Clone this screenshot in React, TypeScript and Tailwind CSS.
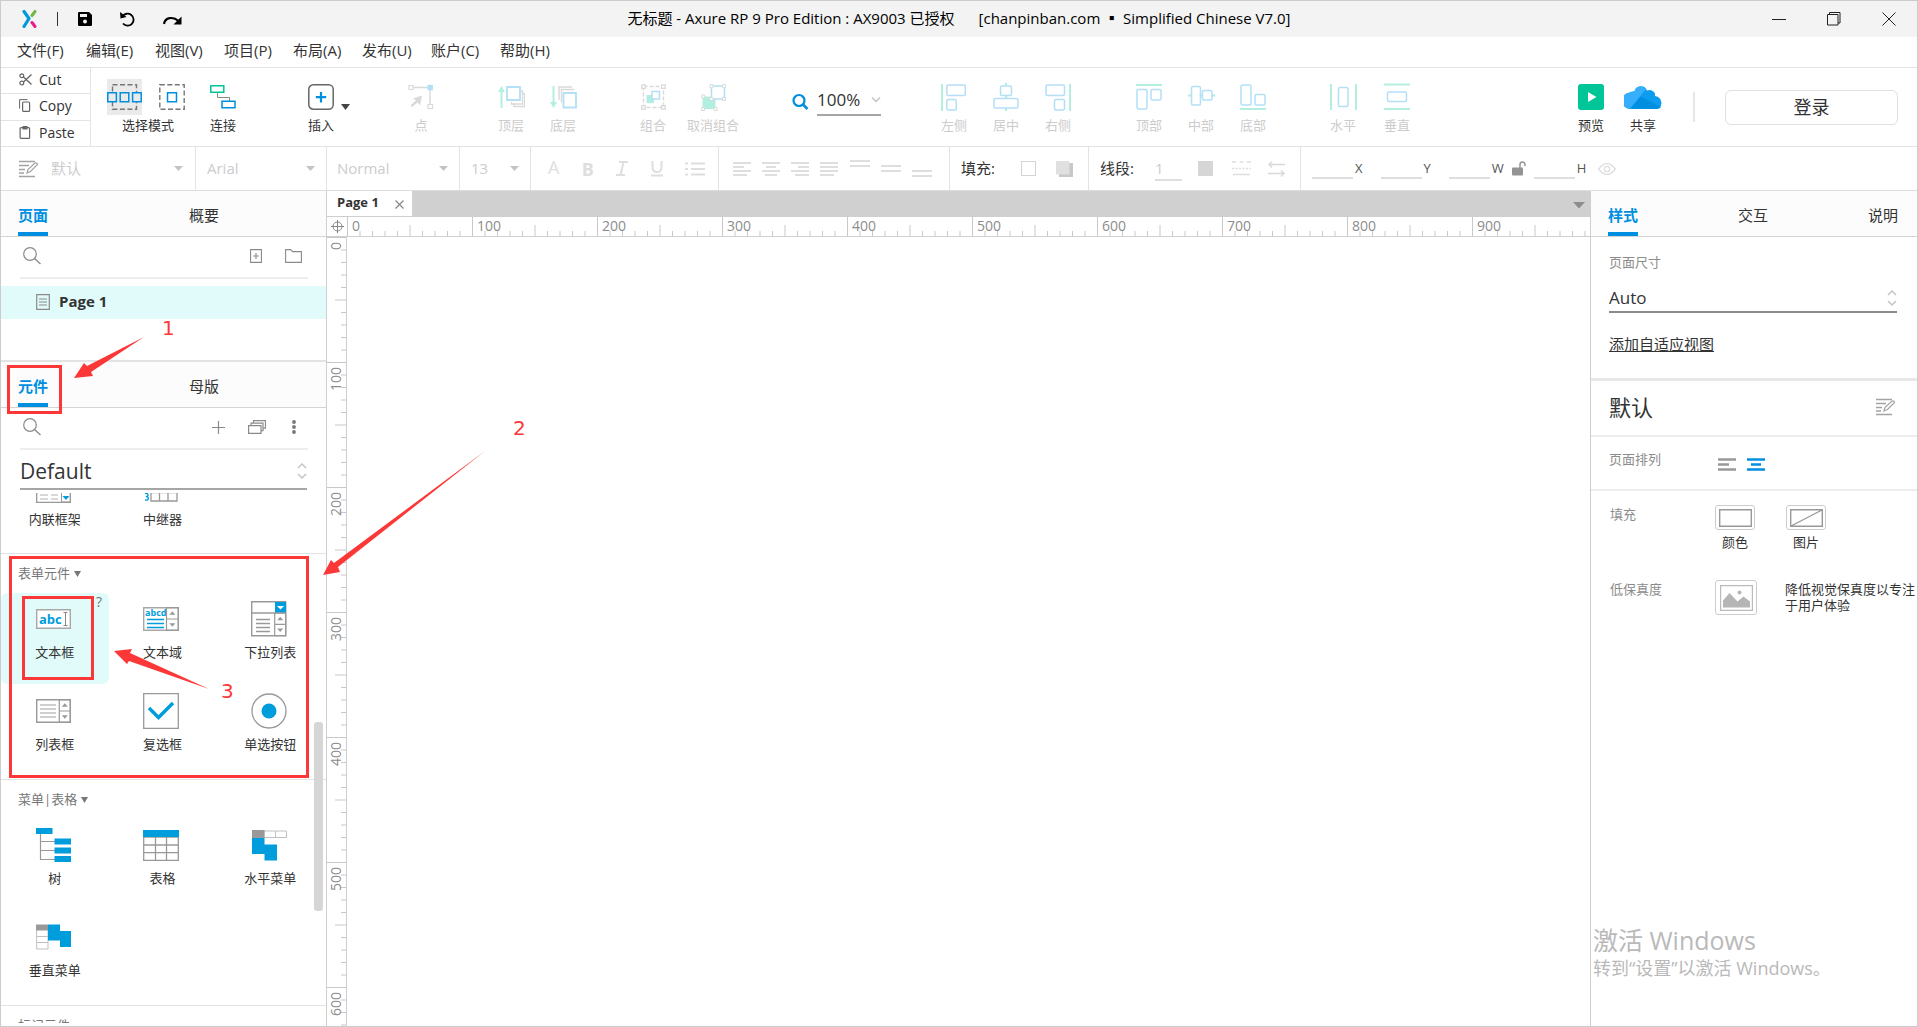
import type { ReactNode } from "react";

const WIDGET_BLUE = "#009ddc";
const UI_BLUE = "#008fe0";
const GREEN = "#00c597";
const PALE_BLUE = "#b3dff7";
const PALE_GREEN = "#b3efe0";
const PALE_GRAY = "#d9d9d9";
const GRAY = "#999999";

const MENUS = ["文件(F)", "编辑(E)", "视图(V)", "项目(P)", "布局(A)", "发布(U)", "账户(C)", "帮助(H)"];
const H_MARKS = [0, 100, 200, 300, 400, 500, 600, 700, 800, 900];
const V_MARKS = [0, 100, 200, 300, 400, 500, 600];
const MINOR_TICKS = [1, 2, 3, 4, 6, 7, 8, 9];

type ChildProps = { children: ReactNode };

/* ---------- shared bits ---------- */

function Icon({ w, h, children }: ChildProps & { w: number; h: number }) {
  return (
    <svg width={w} height={h} viewBox={`0 0 ${w} ${h}`} fill="none" aria-hidden className="block shrink-0">
      {children}
    </svg>
  );
}

function Caret() {
  return (
    <Icon w={9} h={5}>
      <path d="M0 0h9L4.500 5z" fill="#c4c4c4" />
    </Icon>
  );
}

function UpDown() {
  return (
    <Icon w={10} h={18}>
      <path d="M1 6l4-4 4 4M1 12l4 4 4-4" stroke="#c4c4c4" strokeWidth="1.500" />
    </Icon>
  );
}

function SearchIcon() {
  return (
    <Icon w={18} h={18}>
      <circle cx="7" cy="7" r="6.300" stroke="#8a8a8a" strokeWidth="1.200" />
      <path d="M11.500 11.500l6 5.500" stroke="#8a8a8a" strokeWidth="1.400" />
    </Icon>
  );
}

function PencilIcon() {
  return (
    <Icon w={20} h={18}>
      <path d="M0 1.500h16M0 5.500h10M0 9.500h6M0 13h5M0 16.500h16" stroke="#a3a3a3" strokeWidth="1.300" />
      <path d="M8 13l1-3.500 7-6.500q2-.8 2.500 1.500l-7 7z" fill="white" stroke="#a3a3a3" strokeWidth="1.200" />
    </Icon>
  );
}

function PanelTab({ label, active }: { label: string; active?: boolean }) {
  return (
    <button
      type="button"
      className={
        active
          ? "flex h-[45px] items-center border-b-4 border-[#008fe0] pt-2 text-[15px] font-bold text-[#008fe0]"
          : "flex h-[45px] items-center border-b-4 border-transparent pt-2 text-[15px]"
      }
    >
      {label}
    </button>
  );
}

function SearchRow({ label, children }: ChildProps & { label: string }) {
  return (
    <div className="ml-[19px] mr-[18px] flex h-[42px] items-center border-b-2 border-[#ededed] pb-[2px] pl-[3px]">
      <label className="flex flex-1 items-center">
        <SearchIcon />
        <input type="text" aria-label={label} className="h-6 w-24 outline-none" />
      </label>
      {children}
    </div>
  );
}

/* ---------- title bar and menus ---------- */

function TitleBar() {
  return (
    <header className="grid h-9 shrink-0 grid-cols-[1fr_auto_1fr] items-center bg-[#f3f3f3] text-[15px] text-black">
      <div className="flex items-center pl-[21px]">
        <Icon w={15} h={18}>
          <path d="M2 1.500L7 8.500 2 16.500" stroke="#0099dc" strokeWidth="3.200" strokeLinecap="round" strokeLinejoin="round" />
          <path d="M10 5.500l3-4" stroke="#73b843" strokeWidth="3" strokeLinecap="round" />
          <path d="M10 12.500l3 4" stroke="#ec1c8e" strokeWidth="3" strokeLinecap="round" />
        </Icon>
        <span className="ml-5 h-[14px] w-px bg-[#333]" />
        <button type="button" aria-label="Save" className="ml-5">
          <Icon w={14} h={14}>
            <path d="M1 0h10l3 3v10q0 1-1 1H1q-1 0-1-1V1q0-1 1-1z" fill="black" />
            <path d="M2 2h7v3H2z" fill="#f3f3f3" />
            <circle cx="7" cy="9.500" r="2" fill="#f3f3f3" />
          </Icon>
        </button>
        <button type="button" aria-label="Undo" className="ml-7">
          <Icon w={15} h={15}>
            <path d="M2.500 4.500A6 6 0 1 1 3 11.500" stroke="black" strokeWidth="1.800" />
            <path d="M0 0l.5 6.500 6-1.500z" fill="black" />
          </Icon>
        </button>
        <button type="button" aria-label="Redo" className="ml-7">
          <Icon w={19} h={15}>
            <path d="M1 12C2 5.500 10 4 15.500 9" stroke="black" strokeWidth="2.200" />
            <path d="M18.500 4.500v8h-8z" fill="black" />
          </Icon>
        </button>
      </div>
      <h1 className="flex gap-6 whitespace-pre pb-[2px]">
        <span>无标题 - Axure RP 9 Pro Edition : AX9003 已授权</span>
        <span>[chanpinban.com ▪ Simplified Chinese V7.0]</span>
      </h1>
      <div className="flex items-center justify-end gap-[41px] pr-[21px]">
        <button type="button" aria-label="Minimize">
          <Icon w={14} h={14}>
            <path d="M0 7.500h14" stroke="#222" />
          </Icon>
        </button>
        <button type="button" aria-label="Restore">
          <Icon w={14} h={14}>
            <path d="M.5 2.500h10.500v10.500H.5zM2.500 2.500v-2h10.500v10.500h-2" stroke="#222" />
          </Icon>
        </button>
        <button type="button" aria-label="Close">
          <Icon w={14} h={14}>
            <path d="M.5 .5l13 13M13.500 .5l-13 13" stroke="#222" />
          </Icon>
        </button>
      </div>
    </header>
  );
}

function MenuBar() {
  return (
    <nav className="flex h-[30px] shrink-0 items-center gap-5 pb-1 pl-4 text-[15px]">
      {MENUS.map((m) => (
        <button key={m} type="button" className="w-[49px] whitespace-nowrap text-left">
          {m}
        </button>
      ))}
    </nav>
  );
}

/* ---------- main toolbar ---------- */

function Tool({ label, on, children }: ChildProps & { label: string; on?: boolean }) {
  return (
    <button
      type="button"
      disabled={!on}
      className={
        on
          ? "flex w-[52px] shrink-0 flex-col items-center whitespace-nowrap text-[13px] leading-5 text-[#333]"
          : "flex w-[52px] shrink-0 flex-col items-center whitespace-nowrap text-[13px] leading-5 text-[#cccccc]"
      }
    >
      <span className="flex h-9 items-center">{children}</span>
      {label}
    </button>
  );
}

function ClipButton({ label, children }: ChildProps & { label: string }) {
  return (
    <button type="button" className="flex flex-1 items-center gap-[7px] pb-[2px] pl-[18px] text-[14px]">
      {children}
      {label}
    </button>
  );
}

function Toolbar() {
  return (
    <div className="flex h-20 shrink-0 items-stretch border-y border-[#e3e3e3]">
      <div className="flex w-[90px] shrink-0 flex-col divide-y divide-[#e3e3e3] border-r border-[#e3e3e3]">
        <ClipButton label="Cut">
          <Icon w={13} h={13}>
            <circle cx="2.800" cy="2.800" r="1.900" stroke="#666" strokeWidth="1.200" />
            <circle cx="2.800" cy="10" r="1.900" stroke="#666" strokeWidth="1.200" />
            <path d="M4.500 4l8 7.500M4.500 9l8-7.500" stroke="#666" strokeWidth="1.300" />
          </Icon>
        </ClipButton>
        <ClipButton label="Copy">
          <Icon w={13} h={13}>
            <path d="M8.500 .6H.6v9" stroke="#666" />
            <rect x="3.600" y="3" width="7" height="9.400" rx="1" stroke="#666" strokeWidth="1.200" />
          </Icon>
        </ClipButton>
        <ClipButton label="Paste">
          <Icon w={13} h={13}>
            <rect x="1.100" y="1.700" width="9.500" height="10.700" rx="1" stroke="#666" strokeWidth="1.200" />
            <path d="M3.500 0h5v3.500h-5z" fill="#666" />
          </Icon>
        </ClipButton>
      </div>

      <div className="flex min-w-0 flex-1 items-center">
        <div className="ml-4 flex w-[78px] shrink-0 flex-col items-center text-[13px] leading-5">
          <div className="flex w-full justify-between">
            <button type="button" aria-label="选择模式 相交" className="flex h-9 w-[35px] items-center bg-[#eaeaea]">
              <Icon w={35} h={26}>
                <path d="M5.500 .8h24v24.400h-24z" stroke="#777" strokeWidth="1.400" strokeDasharray="5 2.500" />
                <path d="M.8 8.700h8.600v9H.8zM13.200 8.700h8.600v9h-8.600zM25.600 8.700h8.600v9h-8.600z" fill="#eaeaea" stroke={UI_BLUE} strokeWidth="1.500" />
              </Icon>
            </button>
            <button type="button" aria-label="选择模式 包含" className="flex h-9 items-center">
              <Icon w={26} h={26}>
                <path d="M.8 .8h24.400v24.400H.8z" stroke="#777" strokeWidth="1.400" strokeDasharray="5 2.500" />
                <path d="M8.500 8.700h9v9h-9z" stroke={UI_BLUE} strokeWidth="1.500" />
              </Icon>
            </button>
          </div>
          <span className="pl-1">选择模式</span>
        </div>
        <div className="ml-3 flex">
          <Tool label="连接" on>
            <Icon w={26} h={24}>
              <path d="M7.500 7.500v5h12v4" stroke="#888" />
              <path d="M.8 .8h13v6.500h-13z" stroke={GREEN} strokeWidth="1.500" />
              <path d="M12 16.200h13v6.500H12z" stroke={UI_BLUE} strokeWidth="1.500" />
            </Icon>
          </Tool>
        </div>
        <div className="ml-[46px] flex items-center">
          <Tool label="插入" on>
            <Icon w={26} h={26}>
              <rect x=".8" y=".8" width="24.400" height="24.400" rx="4.500" stroke="#666" strokeWidth="1.500" />
              <path d="M13 8v10.400M7.800 13.200h10.400" stroke={UI_BLUE} strokeWidth="2.200" />
            </Icon>
          </Tool>
          <button type="button" aria-label="插入菜单" className="-ml-[6px]">
            <Icon w={9} h={6}>
              <path d="M0 0h9L4.500 6z" fill="#444" />
            </Icon>
          </button>
        </div>
        <div className="ml-[45px] flex">
          <Tool label="点">
            <Icon w={26} h={26}>
              <path d="M4 3.500h18v18" stroke={PALE_GRAY} strokeWidth="1.400" />
              <path d="M1 1.500h4v4H1zM20 20.500h4.500v4H20z" fill="white" stroke={PALE_GRAY} strokeWidth="1.200" />
              <path d="M19.500 .8h5.500v5.500h-5.500z" fill={PALE_BLUE} />
              <path d="M14 11.500l-2 10-2.500-3-5.500 4.500-1.500-1.800 5.500-4.700-3-2z" fill={PALE_GRAY} />
            </Icon>
          </Tool>
        </div>
        <div className="ml-[38px] flex">
          <Tool label="顶层">
            <Icon w={27} h={24}>
              <path d="M3.500 23V4" stroke={PALE_GREEN} strokeWidth="2" />
              <path d="M0 7l3.500-6L7 7z" fill={PALE_GREEN} />
              <path d="M22 6h2.500v13H13.500v-2M24.500 8.500H26.500v13H16v-2" stroke={PALE_GRAY} strokeWidth="1.300" />
              <path d="M9 2h13v13H9z" fill="white" stroke={PALE_BLUE} strokeWidth="1.800" />
            </Icon>
          </Tool>
          <Tool label="底层">
            <Icon w={27} h={24}>
              <path d="M3.500 1v19" stroke={PALE_GREEN} strokeWidth="2" />
              <path d="M0 17l3.500 6L7 17z" fill={PALE_GREEN} />
              <path d="M9 15V2h13M11.500 17.500v-13h13" stroke={PALE_GRAY} strokeWidth="1.400" />
              <path d="M13.500 8h12.500v14.500H13.500z" fill="white" stroke={PALE_BLUE} strokeWidth="1.800" />
            </Icon>
          </Tool>
        </div>
        <div className="ml-[38px] flex gap-2">
          <Tool label="组合">
            <Icon w={25} h={26}>
              <path d="M2.500 2.500h20v21h-20z" stroke={PALE_GRAY} strokeWidth="1.400" strokeDasharray="4 2" />
              <path d="M.8 .8h3.500v3.500H.8zM20.700 .8h3.500v3.500h-3.500zM.8 21.700h3.500v3.500H.8zM20.700 21.700h3.500v3.500h-3.500z" fill="white" stroke={PALE_GRAY} strokeWidth="1.300" />
              <path d="M5.500 11h7.500v8H5.500z" fill={PALE_GREEN} />
              <path d="M11 7.500h7.500V15H11z" fill="white" stroke={PALE_BLUE} strokeWidth="1.500" />
            </Icon>
          </Tool>
          <Tool label="取消组合">
            <Icon w={25} h={27}>
              <path d="M1.500 12.500h13v12.500h-13z" fill={PALE_GREEN} />
              <path d="M10.500 2h13v13h-13z" fill="white" stroke={PALE_BLUE} strokeWidth="1.500" />
              <path d="M9 .7h3v3H9zM21.500 .7h3v3h-3zM9 13.500h3v3H9zM21.500 13.500h3v3h-3zM.7 11h3v3h-3zM.7 23.500h3v3h-3zM13 23.500h3v3h-3z" fill="white" stroke={PALE_GRAY} />
            </Icon>
          </Tool>
        </div>
        <label className="ml-[53px] flex items-center gap-2 pb-3">
          <Icon w={17} h={17}>
            <circle cx="7" cy="7.500" r="5.500" stroke={UI_BLUE} strokeWidth="2.200" />
            <path d="M11 11.500l4.500 4.500" stroke={UI_BLUE} strokeWidth="2.600" />
          </Icon>
          <span className="flex w-16 items-center border-b-2 border-[#a6a6a6]">
            <select aria-label="缩放" className="h-7 w-[54px] appearance-none text-[17px] outline-none">
              <option>100%</option>
            </select>
            <Icon w={10} h={6}>
              <path d="M1 .5l4 4 4-4" stroke="#c4c4c4" strokeWidth="1.500" />
            </Icon>
          </span>
        </label>
        <div className="ml-[47px] flex">
          <Tool label="左侧">
            <Icon w={26} h={27}>
              <path d="M1 0v27" stroke={PALE_GREEN} strokeWidth="2" />
              <rect x="5.800" y="1" width="18.500" height="10.500" rx="1.500" stroke={PALE_BLUE} strokeWidth="1.500" />
              <rect x="5.800" y="15.500" width="9.500" height="10.500" rx="1.500" stroke={PALE_BLUE} strokeWidth="1.500" />
            </Icon>
          </Tool>
          <Tool label="居中">
            <Icon w={26} h={28}>
              <path d="M13 0v3M13 12.500v3M13 25v3" stroke={PALE_GREEN} strokeWidth="2.200" />
              <rect x="7.500" y="3" width="11" height="9.500" rx="1.500" stroke={PALE_BLUE} strokeWidth="1.500" />
              <rect x="1" y="15.500" width="24" height="9.500" rx="1.500" stroke={PALE_BLUE} strokeWidth="1.500" />
            </Icon>
          </Tool>
          <Tool label="右侧">
            <Icon w={26} h={27}>
              <path d="M25 0v27" stroke={PALE_GREEN} strokeWidth="2" />
              <rect x="1" y="1" width="18.500" height="10.500" rx="1.500" stroke={PALE_BLUE} strokeWidth="1.500" />
              <rect x="9.500" y="15.500" width="10" height="10.500" rx="1.500" stroke={PALE_BLUE} strokeWidth="1.500" />
            </Icon>
          </Tool>
        </div>
        <div className="ml-[39px] flex">
          <Tool label="顶部">
            <Icon w={26} h={26}>
              <path d="M0 1h26" stroke={PALE_GREEN} strokeWidth="2" />
              <rect x="1" y="5.500" width="10" height="19.500" rx="1.500" stroke={PALE_BLUE} strokeWidth="1.500" />
              <rect x="15" y="5.500" width="10" height="10.500" rx="1.500" stroke={PALE_BLUE} strokeWidth="1.500" />
            </Icon>
          </Tool>
          <Tool label="中部">
            <Icon w={27} h={26}>
              <path d="M0 11.500h3M11.500 11.500h3M24 11.500h3" stroke={PALE_GREEN} strokeWidth="2.200" />
              <rect x="3.500" y="2.500" width="9" height="18.500" rx="1.500" stroke={PALE_BLUE} strokeWidth="1.500" />
              <rect x="14.500" y="6.500" width="9.500" height="9.500" rx="1.500" stroke={PALE_BLUE} strokeWidth="1.500" />
            </Icon>
          </Tool>
          <Tool label="底部">
            <Icon w={26} h={26}>
              <path d="M0 25h26" stroke={PALE_GREEN} strokeWidth="2" />
              <rect x="1" y="1" width="10" height="20" rx="1.500" stroke={PALE_BLUE} strokeWidth="1.500" />
              <rect x="15" y="10.500" width="10" height="10.500" rx="1.500" stroke={PALE_BLUE} strokeWidth="1.500" />
            </Icon>
          </Tool>
        </div>
        <div className="ml-[38px] flex gap-[2px]">
          <Tool label="水平">
            <Icon w={27} h={26}>
              <path d="M1 0v26M26 0v26" stroke={PALE_GREEN} strokeWidth="2" />
              <rect x="8.500" y="3.500" width="9.500" height="19" rx="1.500" stroke={PALE_BLUE} strokeWidth="1.500" />
            </Icon>
          </Tool>
          <Tool label="垂直">
            <Icon w={26} h={28}>
              <path d="M0 1.500h26M0 26h26" stroke={PALE_GREEN} strokeWidth="2" />
              <rect x="3.500" y="9" width="19" height="9.500" rx="1.500" stroke={PALE_BLUE} strokeWidth="1.500" />
            </Icon>
          </Tool>
        </div>

        <div className="ml-auto flex items-center">
          <Tool label="预览" on>
            <Icon w={26} h={26}>
              <rect width="26" height="26" rx="3" fill={GREEN} />
              <path d="M10 8l8.500 5L10 18z" fill="white" />
            </Icon>
          </Tool>
          <Tool label="共享" on>
            <Icon w={38} h={26}>
              <path d="M7 25A7 7 0 0 1 6 8.500q2-1.500 4.500-1A6.500 6.500 0 0 1 23 6.500q5-2 8 3v2.500q6 1 6.500 7-.5 6-6 6z" fill="#0e9cf0" />
              <path d="M7 25A7 7 0 0 1 6 8.500q2-1.500 4.500-1A6.500 6.500 0 0 1 22 5L6 24.500z" fill="#36aefb" />
              <path d="M6.500 24.800L17 12.500 37 23q-1.500 2-5 2z" fill="#008fe0" />
            </Icon>
          </Tool>
          <span className="ml-6 h-[30px] w-[2px] bg-[#e6e6e6]" />
          <button type="button" className="ml-[30px] mr-[19px] h-[35px] w-[173px] rounded-md border border-[#e0e0e0] text-[18px]">
            登录
          </button>
        </div>
      </div>
    </div>
  );
}

/* ---------- style bar ---------- */

function BarSelect({ label, value }: { label: string; value: string }) {
  return (
    <>
      <select disabled aria-label={label} className="w-0 min-w-0 flex-1 appearance-none text-[15px] text-[#cccccc] opacity-100">
        <option>{value}</option>
      </select>
      <Caret />
    </>
  );
}

function Lines({ d, w = 18, h = 14 }: { d: string; w?: number; h?: number }) {
  return (
    <button type="button" disabled>
      <Icon w={w} h={h}>
        <path d={d} stroke="#dedede" strokeWidth="2" />
      </Icon>
    </button>
  );
}

function Coord({ label }: { label: string }) {
  return (
    <label className="flex items-center text-[13px] text-[#555]">
      <input type="text" disabled className="mr-[2px] h-5 w-[41px] border-b-2 border-[#dedede]" />
      {label}
    </label>
  );
}

function StyleBar() {
  return (
    <div className="flex h-[44px] shrink-0 items-stretch border-b border-[#dddddd] text-[#dedede]">
      <div className="flex w-[195px] items-center border-r border-[#e3e3e3] pl-[18px] pr-3">
        <PencilIcon />
        <span className="ml-3 flex flex-1 items-center">
          <BarSelect label="样式" value="默认" />
        </span>
      </div>
      <div className="flex w-[131px] items-center border-r border-[#e3e3e3] pl-[11px] pr-[11px]">
        <BarSelect label="字体" value="Arial" />
      </div>
      <div className="flex w-[133px] items-center border-r border-[#e3e3e3] pl-[10px] pr-[11px]">
        <BarSelect label="字型" value="Normal" />
      </div>
      <div className="flex w-[71px] items-center border-r border-[#e3e3e3] pl-[11px] pr-[11px]">
        <BarSelect label="字号" value="13" />
      </div>
      <div className="flex w-[188px] items-center justify-between border-r border-[#e3e3e3] pl-[17px] pr-[13px] text-[18px] leading-5">
        <button type="button" disabled className="pb-1">A</button>
        <button type="button" disabled className="font-bold">B</button>
        <button type="button" disabled aria-label="Italic">
          <Icon w={12} h={15}>
            <path d="M3 1h9M0 14h9M7.500 1l-3 13" stroke="#dedede" strokeWidth="2" />
          </Icon>
        </button>
        <button type="button" disabled aria-label="Underline">
          <Icon w={12} h={16}>
            <path d="M1.500 0v6.500a4.500 4.500 0 0 0 9 0V0M0 14.500h12" stroke="#dedede" strokeWidth="2" />
          </Icon>
        </button>
        <Lines w={20} d="M0 1.500h3M0 7h3M0 12.500h3M6 1.500h14M6 7h14M6 12.500h14" />
      </div>
      <div className="flex w-[231px] items-center justify-between border-r border-[#e3e3e3] pl-[14px] pr-[17px]">
        <Lines d="M0 1h18M0 5h11M0 9h18M0 13h14" />
        <Lines d="M0 1h18M4 5h10M0 9h18M3 13h12" />
        <Lines d="M0 1h18M7 5h11M0 9h18M4 13h14" />
        <Lines d="M0 1h18M0 5h18M0 9h18M0 13h14" />
        <Lines w={20} h={22} d="M0 3h20M0 8h20" />
        <Lines w={20} h={22} d="M0 8h20M0 13h20" />
        <Lines w={20} h={22} d="M0 13h20M0 18h20" />
      </div>
      <div className="flex w-[139px] items-center border-r border-[#e3e3e3] pl-[11px]">
        <span className="w-[60px] text-[15px] text-[#333]">填充:</span>
        <button type="button" disabled aria-label="填充颜色" className="size-[15px] border border-[#d4d4d4]" />
        <button type="button" disabled aria-label="阴影" className="ml-5">
          <Icon w={17} h={16}>
            <path d="M3 2h14v14H3z" fill="#c8c8c8" />
            <path d="M0 0h13.500v13.500H0z" fill="#e0e0e0" />
          </Icon>
        </button>
      </div>
      <div className="flex w-[212px] items-center border-r border-[#e3e3e3] pl-[11px]">
        <label className="flex items-center text-[15px] text-[#333]">
          <span className="w-[55px]">线段:</span>
          <input type="text" disabled defaultValue="1" className="h-6 w-[27px] border-b-2 border-[#dedede] text-[#cccccc]" />
        </label>
        <button type="button" disabled aria-label="线段颜色" className="ml-4 size-[15px] bg-[#d6d6d6]" />
        <button type="button" disabled aria-label="线型" className="ml-[19px]">
          <Icon w={19} h={15}>
            <path d="M0 1h19" stroke="#dedede" strokeWidth="1.500" strokeDasharray="4 3.500" />
            <path d="M0 7.500h19" stroke="#dedede" strokeWidth="1.500" strokeDasharray="2 1.500" />
            <path d="M1 13.500h17" stroke="#dedede" strokeWidth="1.500" />
          </Icon>
        </button>
        <button type="button" disabled aria-label="箭头" className="ml-[17px]">
          <Icon w={17} h={16}>
            <path d="M17 3.500H1M4 .5l-3 3 3 3M0 12.500h16M13 9.500l3 3-3 3" stroke="#d8d8d8" strokeWidth="1.400" />
          </Icon>
        </button>
      </div>
      <div className="flex items-center gap-[18px] pl-[11px]">
        <Coord label="X" />
        <Coord label="Y" />
        <div className="flex items-center gap-2">
          <Coord label="W" />
          <button type="button" aria-label="锁定比例">
            <Icon w={14} h={15}>
              <rect y="6.500" width="11" height="8" rx="1" fill="#949494" />
              <path d="M8 7V3.500a2.500 2.500 0 0 1 5 0V5" stroke="#949494" strokeWidth="1.500" />
            </Icon>
          </button>
          <Coord label="H" />
          <button type="button" aria-label="可见性" className="ml-1">
            <Icon w={18} h={12}>
              <path d="M.7 6q8.300-11 16.600 0-8.300 11-16.600 0z" stroke="#dedede" strokeWidth="1.300" />
              <circle cx="9" cy="6" r="2.700" stroke="#dedede" strokeWidth="1.300" />
            </Icon>
          </button>
        </div>
      </div>
    </div>
  );
}

/* ---------- left column ---------- */

function Pages() {
  return (
    <section className="flex h-[169px] shrink-0 flex-col">
      <div className="flex border-b border-[#d4d4d4] bg-[#fcfcfc] pl-[17px]">
        <div className="w-[171px]">
          <PanelTab label="页面" active />
        </div>
        <PanelTab label="概要" />
      </div>
      <SearchRow label="搜索页面">
        <button type="button" aria-label="添加页面" className="mr-[23px]">
          <Icon w={12} h={14}>
            <path d="M.6 .6h10.800v12.800H.6zM6 4v6M3 7h6" stroke="#8a8a8a" strokeWidth="1.100" />
          </Icon>
        </button>
        <button type="button" aria-label="添加文件夹" className="mr-[6px]">
          <Icon w={17} h={14}>
            <path d="M.6 .6h5l2 2h8.800v10.800H.6z" stroke="#8a8a8a" strokeWidth="1.100" />
          </Icon>
        </button>
      </SearchRow>
      <button type="button" className="mt-[7px] flex h-[33px] shrink-0 items-center gap-[9px] bg-[#e0fbfa] pb-[2px] pl-[35px] text-[15px] font-bold">
        <Icon w={14} h={16}>
          <path d="M.7 .7h12.600v14.600H.7zM3 5h8M3 8h8M3 11h8" stroke="#8a8a8a" strokeWidth="1.200" />
        </Icon>
        Page 1
      </button>
    </section>
  );
}

function Widget({ label, hover, children }: ChildProps & { label: string; hover?: boolean }) {
  return (
    <button
      type="button"
      className={
        hover
          ? "mb-px flex h-[91px] flex-col items-center gap-[6px] rounded-md bg-[#e0fbfa] pt-2 text-[13px] leading-[18px]"
          : "mb-px flex h-[91px] flex-col items-center gap-[6px] pt-2 text-[13px] leading-[18px]"
      }
    >
      <span className="flex h-9 items-center pr-[2px]">{children}</span>
      {label}
    </button>
  );
}

function WidgetGroup({ title, children }: ChildProps & { title: string }) {
  return (
    <section className="h-[226px] shrink-0 border-t border-[#e3e3e3]">
      <h3 className="flex h-[39px] items-center gap-1 pl-[17px] text-[13px] text-[#777]">
        {title}
        <Icon w={8} h={6}>
          <path d="M0 0h7L3.500 6z" fill="#777" />
        </Icon>
      </h3>
      <div className="grid grid-cols-3 pr-[2px]">{children}</div>
    </section>
  );
}

function Spinner({ x, y, w, h }: { x: number; y: number; w: number; h: number }) {
  const mid = x + w / 2;
  return (
    <>
      <path d={`M${x} ${y}h${w}v${h}h${-w}zM${x} ${y + h / 2}h${w}`} stroke={GRAY} strokeWidth="1.200" />
      <path
        d={`M${mid - 3} ${y + h / 4 + 1.5}h6l-3-3.500zM${mid - 3} ${y + (h * 3) / 4 - 1.5}h6l-3 3.500z`}
        fill={GRAY}
      />
    </>
  );
}

function Widgets() {
  return (
    <section className="flex min-h-0 flex-1 flex-col border-t-2 border-[#e3e3e3]">
      <div className="flex border-b border-[#d4d4d4] bg-[#fcfcfc] pl-[17px]">
        <div className="w-[171px]">
          <PanelTab label="元件" active />
        </div>
        <PanelTab label="母版" />
      </div>
      <SearchRow label="搜索元件">
        <button type="button" aria-label="添加元件库" className="mr-[23px]">
          <Icon w={13} h={13}>
            <path d="M6.500 0v13M0 6.500h13" stroke="#8a8a8a" strokeWidth="1.200" />
          </Icon>
        </button>
        <button type="button" aria-label="元件库" className="mr-[26px]">
          <Icon w={18} h={14}>
            <path d="M.6 5.600h12.400v7.800H.6zM3 5.600V3.100h12v7.500h-2M5.500 3V.6h12v7.500H15" stroke="#8a8a8a" strokeWidth="1.200" />
          </Icon>
        </button>
        <button type="button" aria-label="更多" className="mr-3">
          <Icon w={4} h={14}>
            <path d="M2 2h0M2 7h0M2 12h0" stroke="#777" strokeWidth="3.800" strokeLinecap="round" />
          </Icon>
        </button>
      </SearchRow>
      <label className="ml-[19px] mr-[19px] flex h-10 shrink-0 items-center border-b-2 border-[#a6a6a6] pt-1">
        <select aria-label="元件库" className="flex-1 appearance-none text-[21px] leading-7 outline-none">
          <option>Default</option>
        </select>
        <UpDown />
      </label>
      <div className="mb-[3px] mt-[3px] flex min-h-0 flex-1 overflow-hidden">
        <div className="-mt-[33px] flex flex-1 flex-col">
          <div className="grid shrink-0 grid-cols-3 pb-px pr-[2px]">
            <Widget label="内联框架">
              <Icon w={35} h={34}>
                <path d="M.7 .7h33.600v32.600H.7z" stroke={GRAY} strokeWidth="1.300" />
                <path d="M4 26h8M15 26h7M4 30h8M15 30h7" stroke="#ccc" strokeWidth="1.300" />
                <path d="M25.500 23h9v10h-9z" stroke={GRAY} />
                <path d="M26.500 27h7L30 31z" fill={WIDGET_BLUE} />
              </Icon>
            </Widget>
            <Widget label="中继器">
              <Icon w={34} h={32}>
                <path d="M7 22.500h26v8.500H7zM15.500 22.500v8.500M24 22.500v8.500M7 12h26v8.500H7z" stroke={GRAY} strokeWidth="1.300" />
                <path d="M1 23.500q3-.5 3 1.500t-2 1.500q2.300 0 2.300 2t-3.300 1.500" stroke={WIDGET_BLUE} strokeWidth="1.400" />
              </Icon>
            </Widget>
          </div>
          <WidgetGroup title="表单元件">
            <Widget label="文本框" hover>
              <Icon w={35} h={20}>
                <path d="M.7 .7h33.600v18.600H.7z" fill="white" stroke="#a8a8a8" strokeWidth="1.400" />
                <text x="3" y="15" fontSize="13" fontWeight="bold" fill={WIDGET_BLUE}>abc</text>
                <path d="M27.500 3.500h4M27.500 16.500h4M29.500 3.500v13" stroke="#888" />
              </Icon>
            </Widget>
            <Widget label="文本域">
              <Icon w={36} h={24}>
                <path d="M.7 .7h34.600v22.600H.7z" stroke="#a8a8a8" strokeWidth="1.400" />
                <text x="2" y="9" fontSize="9" fontWeight="bold" fill={WIDGET_BLUE}>abcd</text>
                <path d="M4 12.500h17M4 16.500h17M4 20.500h17" stroke={WIDGET_BLUE} strokeWidth="1.500" />
                <Spinner x={23.500} y={0.700} w={11.800} h={22.600} />
              </Icon>
            </Widget>
            <Widget label="下拉列表">
              <Icon w={36} h={36}>
                <path d="M.7 .7h34v34H.7zM.7 12h34" stroke={GRAY} strokeWidth="1.400" />
                <path d="M24 1h11v10.500H24z" fill={WIDGET_BLUE} />
                <path d="M26 5h7l-3.500 3.500z" fill="white" />
                <path d="M5 18.500h14M5 22.500h14M5 26.500h14M5 30.500h14" stroke={GRAY} strokeWidth="1.300" />
                <Spinner x={23.700} y={12} w={11} h={22.700} />
              </Icon>
            </Widget>
            <Widget label="列表框">
              <Icon w={35} h={24}>
                <path d="M.7 .7h33.600v22.600H.7z" stroke={GRAY} strokeWidth="1.400" />
                <path d="M4 6h16M4 10h16M4 14h16M4 18h16" stroke="#c0c0c0" strokeWidth="1.300" />
                <Spinner x={23.300} y={0.700} w={11} h={22.600} />
              </Icon>
            </Widget>
            <Widget label="复选框">
              <Icon w={36} h={36}>
                <path d="M.7 .7h34.600v34.600H.7z" stroke={GRAY} strokeWidth="1.300" />
                <path d="M6 15l9.500 9.500L30 10" stroke={WIDGET_BLUE} strokeWidth="3.400" />
              </Icon>
            </Widget>
            <Widget label="单选按钮">
              <Icon w={36} h={36}>
                <circle cx="18" cy="18" r="17" stroke={GRAY} strokeWidth="1.300" />
                <circle cx="18" cy="18" r="7.500" fill={WIDGET_BLUE} />
              </Icon>
            </Widget>
          </WidgetGroup>
          <WidgetGroup title="菜单|表格">
            <Widget label="树">
              <Icon w={35} h={34}>
                <path d="M4.500 6v25.500H19M4.500 13.500H19M4.500 22.500H19" stroke={GRAY} strokeWidth="1.200" />
                <path d="M0 0h16.500v6H0zM18.500 10.500H35v6H18.500zM18.500 19.500H35v6H18.500zM18.500 28H35v6H18.500z" fill={WIDGET_BLUE} />
              </Icon>
            </Widget>
            <Widget label="表格">
              <Icon w={36} h={31}>
                <path d="M.7 7h34.600v23.300H.7zM.7 15h34.600M.7 22.700h34.600M12.500 7v23M23.500 7v23" stroke={GRAY} strokeWidth="1.300" />
                <path d="M0 0h36v7H0z" fill={WIDGET_BLUE} />
              </Icon>
            </Widget>
            <Widget label="水平菜单">
              <Icon w={35} h={31}>
                <path d="M12 1h22.500v6.500H12zM23.500 1v6.500" stroke="#c0c0c0" />
                <path d="M0 0h12.500v8H0z" fill={GRAY} />
                <path d="M0 8h12.500v6.500H25v16H12.500V24H0z" fill={WIDGET_BLUE} />
              </Icon>
            </Widget>
            <Widget label="垂直菜单">
              <Icon w={35} h={26}>
                <path d="M.6 5v20h11.400V5M.6 12.500H12M.6 18.500H12" stroke="#c0c0c0" />
                <path d="M0 .5h12v6H0z" fill={GRAY} />
                <path d="M12 .5h12v6.500h11v16H24v-6.500H12z" fill={WIDGET_BLUE} />
              </Icon>
            </Widget>
          </WidgetGroup>
          <WidgetGroup title="标记元件">{null}</WidgetGroup>
        </div>
      </div>
    </section>
  );
}

/* ---------- canvas ---------- */

function HRuler() {
  return (
    <div className="flex h-[19px] min-w-0 flex-1 overflow-hidden">
      {H_MARKS.map((n) => (
        <div key={n} className="grid w-[125px] shrink-0">
          <span className="pl-[5px] text-[14px] leading-[18px] text-[#8c8c8c] [grid-area:1/1]">{n}</span>
          <svg className="h-[19px] w-[125px] [grid-area:1/1]" viewBox="0 0 125 19" aria-hidden>
            <path d="M.5 0v19M63 8v11" stroke="#c8c8c8" />
            {MINOR_TICKS.map((t) => (
              <path key={t} d={`M${t * 12.5 + 0.5} 14v5`} stroke="#c8c8c8" />
            ))}
          </svg>
        </div>
      ))}
    </div>
  );
}

function VRuler() {
  return (
    <div className="flex w-[19px] shrink-0 flex-col overflow-hidden">
      {V_MARKS.map((n) => (
        <div key={n} className="grid h-[125px] shrink-0">
          <span className="rotate-180 pb-[5px] text-right text-[14px] leading-[18px] text-[#8c8c8c] [grid-area:1/1] [writing-mode:vertical-rl]">
            {n}
          </span>
          <svg className="h-[125px] w-[19px] [grid-area:1/1]" viewBox="0 0 19 125" aria-hidden>
            <path d="M0 .5h19M8 63h11" stroke="#c8c8c8" />
            {MINOR_TICKS.map((t) => (
              <path key={t} d={`M14 ${t * 12.5 + 0.5}h5`} stroke="#c8c8c8" />
            ))}
          </svg>
        </div>
      ))}
    </div>
  );
}

function Canvas() {
  return (
    <main className="flex min-w-0 flex-1 flex-col border-x border-[#cfcfcf]">
      <div className="flex h-[26px] shrink-0 items-center justify-between border-b border-[#cfcfcf] bg-[#d0d0d0] pr-[5px]">
        <div className="flex h-full w-[85px] items-center justify-between bg-white pb-px pl-[10px] pr-2 text-[13px] font-bold">
          Page 1
          <button type="button" aria-label="关闭页面" className="pt-[3px]">
            <Icon w={9} h={9}>
              <path d="M.5 .5l8 8M8.500 .5l-8 8" stroke="#888" strokeWidth="1.200" />
            </Icon>
          </button>
        </div>
        <button type="button" aria-label="页面列表" className="pt-1">
          <Icon w={12} h={7}>
            <path d="M0 0h12L6 6.500z" fill="#8c8c8c" />
          </Icon>
        </button>
      </div>
      <div className="flex shrink-0 border-b border-[#cfcfcf]">
        <button type="button" aria-label="原点" className="flex h-[19px] w-5 shrink-0 items-center justify-center">
          <Icon w={13} h={13}>
            <circle cx="6.500" cy="6.500" r="4.500" stroke="#888" />
            <path d="M6.500 0v13M0 6.500h13" stroke="#888" />
          </Icon>
        </button>
        <HRuler />
      </div>
      <div className="flex min-h-0 flex-1">
        <VRuler />
        <div className="flex-1 border-l border-[#cfcfcf] bg-white" />
      </div>
    </main>
  );
}

/* ---------- right column ---------- */

function FieldLabel({ children }: ChildProps) {
  return <span className="w-[105px] shrink-0 text-[13px] leading-[18px] text-[#8c8c8c]">{children}</span>;
}

function Inspector() {
  return (
    <aside className="flex w-[326px] shrink-0 flex-col">
      <div className="flex shrink-0 justify-between border-b border-[#d4d4d4] bg-[#fcfcfc] pl-[17px] pr-[19px]">
        <PanelTab label="样式" active />
        <PanelTab label="交互" />
        <PanelTab label="说明" />
      </div>
      <div className="flex h-[144px] shrink-0 flex-col items-start border-b-[3px] border-[#e8e8e8] pl-[18px] pr-5 pt-4">
        <label htmlFor="page-size" className="text-[13px] leading-[18px] text-[#8c8c8c]">
          页面尺寸
        </label>
        <span className="mt-[13px] flex h-[29px] w-full items-center border-b-2 border-[#8c8c8c]">
          <select id="page-size" className="flex-1 appearance-none text-[17px] leading-6 outline-none">
            <option>Auto</option>
          </select>
          <UpDown />
        </span>
        <a href="#adaptive" className="mt-[21px] text-[15px] leading-5 underline">
          添加自适应视图
        </a>
      </div>
      <div className="flex h-[56px] shrink-0 items-center justify-between border-b-2 border-[#ededed] pb-[2px] pl-[18px] pr-[21px]">
        <h2 className="text-[22px]">默认</h2>
        <button type="button" aria-label="管理样式">
          <PencilIcon />
        </button>
      </div>
      <div className="flex h-[54px] shrink-0 items-start border-b-2 border-[#ededed] pl-[18px] pt-[13px]">
        <FieldLabel>页面排列</FieldLabel>
        <button type="button" aria-label="左对齐" className="ml-1 mt-2">
          <Icon w={18} h={13}>
            <path d="M0 1.500h18M0 6.500h11M0 11.500h18" stroke={GRAY} strokeWidth="2.400" />
          </Icon>
        </button>
        <button type="button" aria-label="居中对齐" className="ml-[11px] mt-2">
          <Icon w={18} h={13}>
            <path d="M0 1.500h18M4 6.500h10M0 11.500h18" stroke={UI_BLUE} strokeWidth="2.400" />
          </Icon>
        </button>
      </div>
      <div className="flex items-start pl-[19px] pt-[14px] text-[13px] leading-[18px]">
        <FieldLabel>填充</FieldLabel>
        <button type="button" className="flex w-10 flex-col items-center gap-[3px]">
          <span className="flex h-[25px] w-10 items-center justify-center rounded-[3px] border border-[#cccccc]">
            <Icon w={33} h={18}>
              <path d="M.7 .7h31.600v16.600H.7z" stroke={GRAY} strokeWidth="1.400" />
            </Icon>
          </span>
          颜色
        </button>
        <button type="button" className="ml-[31px] flex w-10 flex-col items-center gap-[3px]">
          <span className="flex h-[25px] w-10 items-center justify-center rounded-[3px] border border-[#cccccc]">
            <Icon w={33} h={18}>
              <path d="M.7 .7h31.600v16.600H.7zM1 17L32 1" stroke={GRAY} strokeWidth="1.400" />
            </Icon>
          </span>
          图片
        </button>
      </div>
      <div className="flex items-start pl-[19px] pt-[29px] text-[13px] leading-4">
        <FieldLabel>低保真度</FieldLabel>
        <button type="button" aria-label="低保真度" className="flex h-[35px] w-[42px] shrink-0 items-center justify-center rounded-[3px] border border-[#cccccc]">
          <Icon w={33} h={26}>
            <path d="M.6 .6h31.800v24.800H.6z" stroke="#bbb" strokeWidth="1.200" />
            <path d="M3 22.500v-7L9.500 8l8 8.500 6-5 6.500 5v6z" fill="#b5b5b5" />
            <circle cx="19.500" cy="7.500" r="2" fill="#b5b5b5" />
          </Icon>
        </button>
        <p className="ml-7 whitespace-nowrap pt-px">
          降低视觉保真度以专注
          <br />
          于用户体验
        </p>
      </div>
      <div className="mt-auto pb-[46px] pl-[2px] text-[#b9b9b9]">
        <p className="text-[25px] leading-8">激活 Windows</p>
        <p className="text-[18px] leading-6">转到“设置”以激活 Windows。</p>
      </div>
    </aside>
  );
}

/* ---------- tutorial marks drawn over the app ---------- */

function Marks() {
  return (
    <div className="pointer-events-none absolute inset-0 font-['DejaVu_Sans',sans-serif] text-[20px] leading-5 text-[#fc3737]">
      <div className="absolute left-[6px] top-[364px] h-[49px] w-[55px] border-[3px] border-[#fc3737]" />
      <div className="absolute left-[8px] top-[555px] h-[222px] w-[300px] border-[3px] border-[#fc3737]" />
      <div className="absolute left-[21px] top-[595px] h-[84px] w-[72px] border-[3px] border-[#fc3737]" />
      <span className="absolute left-[161px] top-[317px]">1</span>
      <span className="absolute left-[512px] top-[417px]">2</span>
      <span className="absolute left-[220px] top-[680px]">3</span>
      <span className="absolute left-[95px] top-[591px] font-['Open_Sans',sans-serif] text-[14px] text-[#777]">?</span>
      <span className="absolute left-[313px] top-[721px] h-[189px] w-[9px] rounded-[3px] bg-[#d6d6d6]" />
      <svg className="absolute left-0 top-0" width="500" height="700" viewBox="1 1 500 700" fill="#fc3737" aria-hidden>
        <path d="M74 378l10-15 3 3 57-29-53 35 2 4z" />
        <path d="M323 575l8-15 3 3 151-112-147 116 2 5z" />
        <path d="M114 651l18-2-2 4 79 36-80-28-2 3z" />
      </svg>
    </div>
  );
}

export default function App() {
  return (
    <div className="relative flex h-screen flex-col overflow-hidden border border-[#cccccc] bg-white font-['Open_Sans','Noto_Sans_CJK_SC',sans-serif] text-[#333]">
      <TitleBar />
      <MenuBar />
      <Toolbar />
      <StyleBar />
      <div className="flex min-h-0 flex-1">
        <aside className="flex w-[325px] shrink-0 flex-col">
          <Pages />
          <Widgets />
        </aside>
        <Canvas />
        <Inspector />
      </div>
      <Marks />
    </div>
  );
}
